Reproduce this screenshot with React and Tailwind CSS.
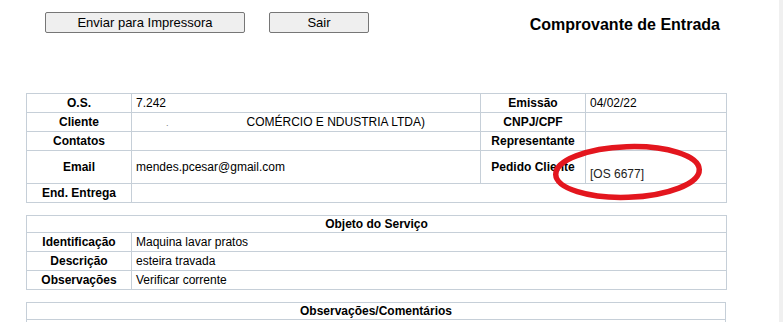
import React from "react";

const B = "border border-[#c6cfd8]";
const L = `${B} p-0 px-1 text-center font-bold align-middle`;
const V = `${B} p-0 px-1 text-left align-middle`;

export default function App() {
  return (
    <div className="relative w-[783px] h-[322px] overflow-hidden bg-white text-black font-['Liberation_Sans',Arial,sans-serif] text-[12px] leading-[14px]">
      {/* header */}
      <div className="flex items-start h-[93px] pt-[12px] pl-[45px] pr-[63px]">
        <button className="w-[200px] h-[21px] border border-[#767676] rounded-[2px] bg-[#efefef] text-[13px] leading-[15px] text-black">
          Enviar para Impressora
        </button>
        <button className="ml-[24px] w-[100px] h-[21px] border border-[#767676] rounded-[2px] bg-[#efefef] text-[13px] leading-[15px] text-black">
          Sair
        </button>
        <div className="ml-auto mt-[4px] text-[16px] leading-[18px] font-bold">Comprovante de Entrada</div>
      </div>

      {/* table 1 */}
      <table className="ml-[26px] w-[700px] table-fixed border-collapse">
        <colgroup>
          <col className="w-[105px]" />
          <col className="w-[349px]" />
          <col className="w-[105px]" />
          <col className="w-[141px]" />
        </colgroup>
        <tbody>
          <tr className="h-[19px]">
            <td className={L}>O.S.</td>
            <td className={V}>7.242</td>
            <td className={L}>Emissão</td>
            <td className={V}>04/02/22</td>
          </tr>
          <tr className="h-[19px]">
            <td className={L}>Cliente</td>
            <td className={V}>
              <span className="inline-block ml-[30px] text-[9px] text-[#777]">.</span>
              <span className="ml-[78px]">COMÉRCIO E NDUSTRIA LTDA)</span>
            </td>
            <td className={L}>CNPJ/CPF</td>
            <td className={V}></td>
          </tr>
          <tr className="h-[19px]">
            <td className={L}>Contatos</td>
            <td className={V}></td>
            <td className={L}>Representante</td>
            <td className={V}></td>
          </tr>
          <tr className="h-[33px]">
            <td className={L}>Email</td>
            <td className={V}>mendes.pcesar@gmail.com</td>
            <td className={L}>Pedido Cliente</td>
            <td className={`${V} text-[#222]`}>
              <br />
              [OS 6677]
            </td>
          </tr>
          <tr className="h-[19px]">
            <td className={L}>End. Entrega</td>
            <td className={V} colSpan={3}></td>
          </tr>
        </tbody>
      </table>

      {/* table 2 */}
      <table className="mt-[12px] ml-[26px] w-[700px] table-fixed border-collapse">
        <colgroup>
          <col className="w-[105px]" />
          <col className="w-[595px]" />
        </colgroup>
        <tbody>
          <tr className="h-[17px]">
            <td className={L} colSpan={2}>Objeto do Serviço</td>
          </tr>
          <tr className="h-[19px]">
            <td className={L}>Identificação</td>
            <td className={V}>Maquina lavar pratos</td>
          </tr>
          <tr className="h-[19px]">
            <td className={L}>Descrição</td>
            <td className={V}>esteira travada</td>
          </tr>
          <tr className="h-[19px]">
            <td className={L}>Observações</td>
            <td className={V}>Verificar corrente</td>
          </tr>
        </tbody>
      </table>

      {/* table 3 */}
      <table className="mt-[12px] ml-[26px] w-[700px] table-fixed border-collapse">
        <tbody>
          <tr className="h-[17px]">
            <td className={L}>Observações/Comentários</td>
          </tr>
          <tr className="h-[19px]">
            <td className={V}></td>
          </tr>
        </tbody>
      </table>

      {/* red hand-drawn ellipse */}
      <svg
        className="absolute left-[548px] top-[140px] pointer-events-none"
        width="160"
        height="64"
        viewBox="0 0 160 64"
      >
        <ellipse
          cx="79.5"
          cy="32"
          rx="71.8"
          ry="25.3"
          fill="none"
          stroke="#e3161e"
          strokeWidth="5.5"
          transform="rotate(-2 79.5 32)"
        />
      </svg>

      {/* right edge strip */}
      <div className="absolute right-0 top-0 bottom-0 w-[4px] bg-[#f0f0f0]" />
    </div>
  );
}
